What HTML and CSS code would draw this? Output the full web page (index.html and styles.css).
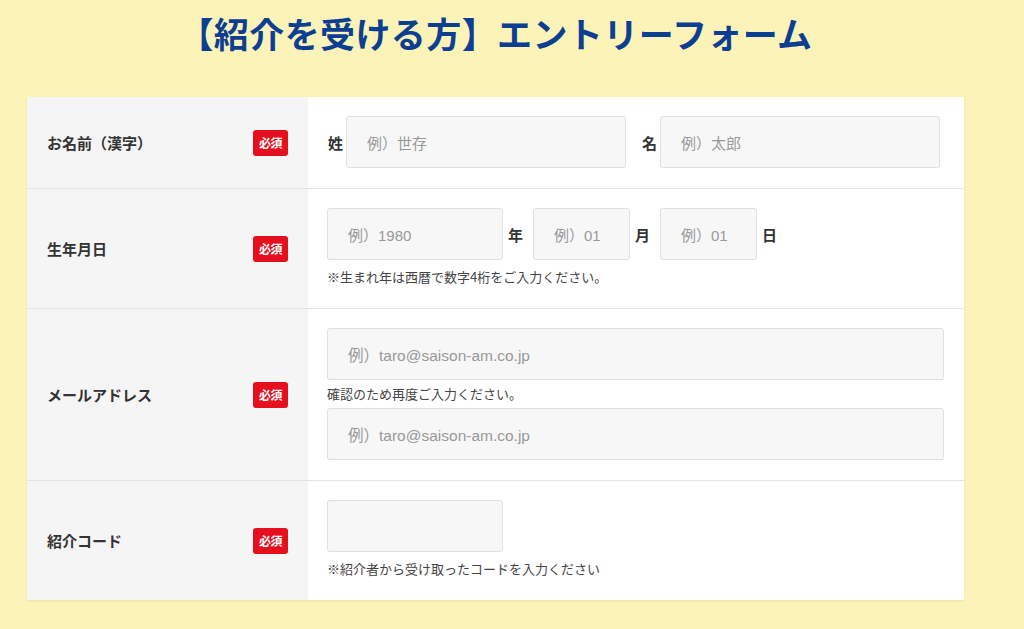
FILE: index.html
```html
<!DOCTYPE html>
<html lang="ja">
<head>
<meta charset="utf-8">
<title>エントリーフォーム</title>
<link rel="stylesheet" href="styles.css">
</head>
<body>
<div class="wrap">
  <h1 class="title">【紹介を受ける方】エントリーフォーム</h1>
  <div class="card">
    <div class="row">
      <div class="label"><span>お名前（漢字）</span><span class="badge">必須</span></div>
      <div class="field">
        <div class="line">
          <span class="unit unit-pre">姓</span>
          <div class="input w-name"><span class="ph">例）世存</span></div>
          <span class="unit unit-pre gap-left">名</span>
          <div class="input w-name"><span class="ph">例）太郎</span></div>
        </div>
      </div>
    </div>
    <div class="row">
      <div class="label"><span>生年月日</span><span class="badge">必須</span></div>
      <div class="field">
        <div class="line">
          <div class="input w-year"><span class="ph">例）1980</span></div>
          <span class="unit">年</span>
          <div class="input w-md"><span class="ph">例）01</span></div>
          <span class="unit">月</span>
          <div class="input w-md"><span class="ph">例）01</span></div>
          <span class="unit">日</span>
        </div>
        <p class="note">※生まれ年は西暦で数字4桁をご入力ください。</p>
      </div>
    </div>
    <div class="row">
      <div class="label"><span>メールアドレス</span><span class="badge">必須</span></div>
      <div class="field field-wide">
        <div class="input w-full"><span class="ph ph-mail">例）taro@saison-am.co.jp</span></div>
        <p class="note note-mid">確認のため再度ご入力ください。</p>
        <div class="input w-full"><span class="ph ph-mail">例）taro@saison-am.co.jp</span></div>
      </div>
    </div>
    <div class="row">
      <div class="label"><span>紹介コード</span><span class="badge">必須</span></div>
      <div class="field">
        <div class="input w-year"></div>
        <p class="note">※紹介者から受け取ったコードを入力ください</p>
      </div>
    </div>
  </div>
</div>
</body>
</html>
```

FILE: styles.css
```css
* { box-sizing: border-box; }
html, body { margin: 0; padding: 0; }
body {
  background: #fcf3b8;
  font-family: "Liberation Sans", "Noto Sans CJK JP", sans-serif;
  color: #333;
  height: 629px;
  overflow: hidden;
}
.wrap {
  width: 937px;
  margin-left: 27px;
  padding-top: 8px;
}
.title {
  margin: 0 0 39px;
  text-align: center;
  font-family: "Noto Sans CJK JP", sans-serif;
  font-size: 35px;
  line-height: 50px;
  font-weight: 700;
  color: #0c3f92;
  letter-spacing: 0.4px;
}
.card {
  background: #fff;
  box-shadow: 0 1px 2px rgba(0,0,0,0.08);
}
.row {
  display: flex;
  border-bottom: 1px solid #e3e3e3;
}
.row:last-child { border-bottom: none; }
.label {
  width: 281px;
  flex: none;
  background: #f5f5f5;
  display: flex;
  align-items: center;
  justify-content: space-between;
  padding: 0 20px;
  font-family: "Noto Sans CJK JP", sans-serif;
  font-size: 15px;
  font-weight: 700;
  color: #333;
}
.badge {
  width: 35px;
  height: 26px;
  border-radius: 3px;
  background: #e60f1e;
  color: #fff;
  font-size: 12px;
  font-weight: 700;
  display: flex;
  align-items: center;
  justify-content: center;
  letter-spacing: -0.5px;
}
.field {
  flex: 1;
  padding: 19px 20px 20px 19px;
}
.line {
  display: flex;
  align-items: center;
}
.input {
  height: 52px;
  background: #f7f7f7;
  border: 1px solid #e0e0e0;
  border-radius: 3px;
  display: flex;
  align-items: center;
  padding-left: 20px;
}
.ph {
  font-size: 15px;
  color: #999;
}
.ph-mail { font-size: 15.5px; }
.w-name { width: 280px; }
.w-year { width: 176px; }
.w-md { width: 97px; }
.w-full { width: 100%; }
.unit {
  font-family: "Noto Sans CJK JP", sans-serif;
  font-size: 15px;
  font-weight: 700;
  color: #333;
  margin: 0 10px 0 5px;
}
.unit-pre { margin: 0 3px 0 1px; }
.gap-left { margin-left: 16px; }
.note {
  margin: 5px 0 0;
  font-family: "Noto Sans CJK JP", sans-serif;
  font-size: 13px;
  line-height: 23px;
  color: #444;
}
.note-mid { margin: 3px 0 3px; line-height: 22px; }
```
